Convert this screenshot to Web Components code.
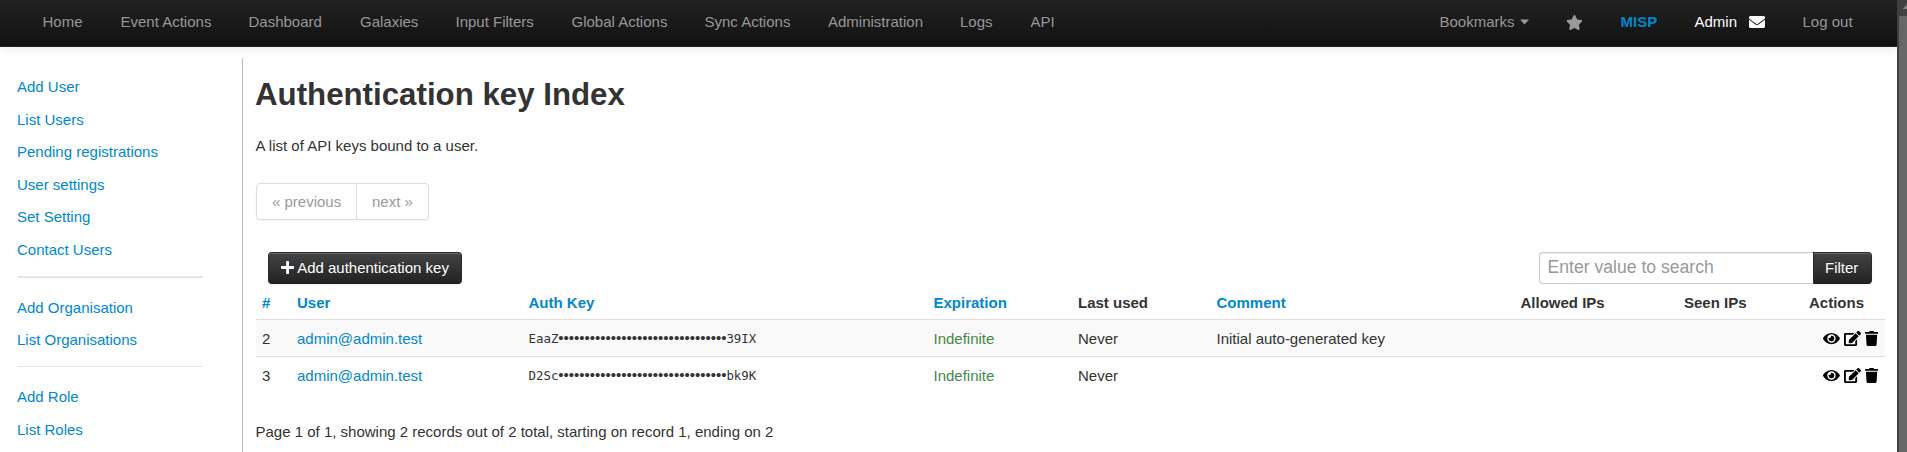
<!DOCTYPE html>
<html lang="en">
<head>
<meta charset="utf-8">
<title>Authentication key Index - MISP</title>
<style>
html,body{margin:0;height:100%;overflow:hidden;background:#fff}
body{font:15px/22px "Liberation Sans",Arial,sans-serif;color:#333}
</style>
</head>
<body>
<misp-app></misp-app>
<script>
const ICONS = {
  star: ['0 0 576 512','M259.3 17.8L194 150.2 47.900 171.500c-26.200 3.800-36.700 36.100-17.700 54.600l105.700 103-25 145.500c-4.500 26.300 23.200 46 46.400 33.700L288 439.600l130.700 68.700c23.200 12.200 50.900-7.400 46.400-33.700l-25-145.500 105.700-103c19-18.500 8.500-50.800-17.700-54.600L382 150.200 316.700 17.800c-11.700-23.600-45.600-23.900-57.400 0z'],
  envelope: ['0 0 512 512','M502.300 190.800c3.900-3.100 9.700-.2 9.700 4.700V400c0 26.500-21.500 48-48 48H48c-26.500 0-48-21.500-48-48V195.600c0-5 5.700-7.800 9.700-4.700 22.400 17.400 52.100 39.500 154.100 113.600 21.100 15.400 56.700 47.800 92.200 47.600 35.700.3 72-32.800 92.300-47.600 102-74.100 131.600-96.300 154-113.700zM256 320c23.200.4 56.600-29.200 73.400-41.400 132.700-96.300 142.800-104.700 173.400-128.700 5.800-4.500 9.200-11.500 9.200-18.900v-19c0-26.500-21.500-48-48-48H48c-26.500 0-48 21.500-48 48v19c0 7.400 3.400 14.300 9.200 18.900 30.600 23.900 40.700 32.400 173.400 128.700 16.800 12.200 50.200 41.800 73.400 41.400z'],
  plus: ['0 0 448 512','M416 208H272V64c0-17.670-14.330-32-32-32h-32c-17.670 0-32 14.330-32 32v144H32c-17.670 0-32 14.330-32 32v32c0 17.670 14.330 32 32 32h144v144c0 17.670 14.330 32 32 32h32c17.670 0 32-14.330 32-32V304h144c17.670 0 32-14.330 32-32v-32c0-17.670-14.330-32-32-32z'],
  eye: ['0 0 576 512','M572.520 241.400C518.290 135.590 410.930 64 288 64S57.680 135.640 3.480 241.410a32.350 32.350 0 0 0 0 29.190C57.710 376.410 165.070 448 288 448s230.320-71.640 284.520-177.410a32.350 32.350 0 0 0 0-29.190zM288 400a144 144 0 1 1 144-144 143.930 143.930 0 0 1-144 144zm0-240a95.310 95.310 0 0 0-25.310 3.790 47.850 47.850 0 0 1-66.900 66.900A95.780 95.780 0 1 0 288 160z'],
  edit: ['0 0 576 512','M402.600 83.200l90.200 90.200c3.800 3.800 3.800 10 0 13.800L274.400 405.600l-92.800 10.300c-12.400 1.400-22.900-9.100-21.500-21.500l10.300-92.800L388.800 83.200c3.800-3.800 10-3.800 13.800 0zm162-22.900l-48.800-48.800c-15.200-15.200-39.900-15.200-55.200 0l-35.400 35.400c-3.800 3.800-3.800 10 0 13.800l90.200 90.200c3.800 3.800 10 3.800 13.800 0l35.400-35.400c15.200-15.300 15.200-40 0-55.200zM384 346.200V448H64V128h229.800c3.200 0 6.200-1.300 8.500-3.500l40-40c7.600-7.600 2.200-20.500-8.500-20.500H48C21.500 64 0 85.500 0 112v352c0 26.500 21.500 48 48 48h352c26.500 0 48-21.500 48-48V306.200c0-10.700-12.900-16-20.500-8.500l-40 40c-2.200 2.300-3.500 5.300-3.500 8.500z'],
  trash: ['0 0 448 512','M432 32H312l-9.400-18.700A24 24 0 0 0 281.100 0H166.800a23.720 23.720 0 0 0-21.400 13.300L136 32H16A16 16 0 0 0 0 48v32a16 16 0 0 0 16 16h416a16 16 0 0 0 16-16V48a16 16 0 0 0-16-16zM53.200 467a48 48 0 0 0 47.900 45h245.800a48 48 0 0 0 47.900-45L416 128H32z']
};
function define(name, html, setup) {
  customElements.define(name, class extends HTMLElement {
    constructor() {
      super();
      const t = document.createElement('template');
      t.innerHTML = html;
      this.attachShadow({mode: 'open'}).appendChild(t.content.cloneNode(true));
    }
    connectedCallback() { if (setup) setup(this, this.shadowRoot); }
  });
}
define('fa-icon', `<style>:host{display:inline-flex;flex:none}svg{display:block;fill:currentColor}</style><svg><path/></svg>`, (el, root) => {
  const [box, d] = ICONS[el.getAttribute('name')];
  const svg = root.querySelector('svg');
  const [, , w, h] = box.split(' ').map(Number);
  const size = Number(el.getAttribute('size') || 15);
  svg.setAttribute('viewBox', box);
  svg.setAttribute('width', size * w / h);
  svg.setAttribute('height', size);
  root.querySelector('path').setAttribute('d', d);
});
define('nav-item', `<style>:host{display:block;flex:none;color:#999;white-space:nowrap;width:var(--w,auto)}a{display:flex;align-items:center;height:22px}</style><a><slot></slot></a>`);
define('top-bar', `<style>
:host{display:flex;box-sizing:border-box;height:47px;padding:11px 0 0 42.500px;background:linear-gradient(#222,#111);border-bottom:1px solid #252525;box-shadow:0 1px 10px rgba(0,0,0,.1);position:relative}
nav-item{text-shadow:0 -1px 0 rgba(0,0,0,.25)}
.right{display:flex;margin-left:auto}
.caret{display:block;margin:0 0 0 5px;fill:#999}
b{color:#08c}.admin{color:#fff}
</style>
<nav-item style="--w:78px">Home</nav-item><nav-item style="--w:128px">Event Actions</nav-item><nav-item style="--w:111.500px">Dashboard</nav-item><nav-item style="--w:95.500px">Galaxies</nav-item><nav-item style="--w:116px">Input Filters</nav-item><nav-item style="--w:133px">Global Actions</nav-item><nav-item style="--w:123.500px">Sync Actions</nav-item><nav-item style="--w:132px">Administration</nav-item><nav-item style="--w:70.500px">Logs</nav-item><nav-item>API</nav-item>
<div class="right"><nav-item style="--w:126px">Bookmarks<svg class="caret" width="9" height="6"><path d="M0 .5h9L4.500 5.500z"/></svg></nav-item><nav-item style="--w:55px"><fa-icon name="star"></fa-icon></nav-item><nav-item style="--w:74px"><b>MISP</b></nav-item><nav-item class="admin" style="--w:54px">Admin</nav-item><nav-item class="admin" style="--w:54px"><fa-icon name="envelope" size="16"></fa-icon></nav-item><nav-item style="--w:94.500px">Log out</nav-item></div>`);
define('side-menu', `<style>
:host{display:block;box-sizing:border-box;width:243px;margin-top:11px;padding:13.100px 39px 0 17px;border-right:1px solid #bbb}
::slotted(a){display:block;height:32.500px;line-height:32.500px;color:#08c}
::slotted(hr){border:0;border-top:1px solid #e5e5e5;margin:9.500px 0 14px 1px;height:0}
::slotted(hr.thick){border-top-width:2px;margin:10px 0 13.500px 1px}
</style><slot></slot>`);
define('page-links', `<style>:host{display:flex;width:max-content;border:1px solid #ddd;border-radius:4px;box-shadow:0 1px 2px rgba(0,0,0,.05);color:#999}
span{box-sizing:border-box;height:35px;line-height:35px;padding-left:15px;width:99px}span+span{border-left:1px solid #ddd;width:72px}</style><span>« previous</span><span>next »</span>`);
define('inverse-button', `<style>:host{display:flex;box-sizing:border-box;height:32px;align-items:center;color:#fff;background:linear-gradient(#444,#222);border:1px solid #2a2a2a;border-bottom-color:#1a1a1a;border-radius:var(--r,4px);box-shadow:inset 0 1px 0 rgba(255,255,255,.2),0 1px 2px rgba(0,0,0,.05);text-shadow:0 -1px 0 rgba(0,0,0,.25);padding:0 var(--p,12px) 1px;white-space:nowrap;gap:3px}</style><slot></slot>`);
define('filter-box', `<style>:host{display:flex}
input{box-sizing:border-box;width:274px;height:32px;margin:0;border:1px solid #ccc;border-right:0;border-radius:4px 0 0 4px;padding:0 0 2px 7.500px;font:17.600px "Liberation Sans",Arial,sans-serif;box-shadow:inset 0 1px 1px rgba(0,0,0,.075)}
input::placeholder{color:#999;opacity:1}inverse-button{--r:0 4px 4px 0;--p:11px;width:59px}</style><input placeholder="Enter value to search"><inverse-button>Filter</inverse-button>`);
define('key-code', `<style>:host{display:block;font:12.400px/22px "DejaVu Sans Mono",monospace;white-space:nowrap}i{font:15px/1 "Liberation Sans",Arial,sans-serif;font-style:normal}</style><slot name="a"></slot><i></i><slot name="b"></slot>`, (el, root) => { root.querySelector('i').textContent = '•'.repeat(32); });
define('row-actions', `<style>:host{display:flex;justify-content:flex-end;align-items:center;gap:4px;height:20px;color:#000}</style><fa-icon name="eye"></fa-icon><fa-icon name="edit"></fa-icon><fa-icon name="trash"></fa-icon>`);
define('key-table', `<style>
:host{display:block}
.row{display:grid;grid-template-columns:35px 231.500px 405px 144.500px 138.500px 304px 163.500px 125px 1fr;box-sizing:border-box;height:37px;padding:8px 6px 0;border-top:1px solid #ddd}
.head{height:35px;border:0;font-weight:bold;padding-top:8px}.odd{background:#f9f9f9}
.l{color:#08c}.g{color:#468847}row-actions{margin:0 1px 0 -6px}
</style>
<div class="row head"><span class="l">#</span><span class="l">User</span><span class="l">Auth Key</span><span class="l">Expiration</span><span>Last used</span><span class="l">Comment</span><span>Allowed IPs</span><span>Seen IPs</span><span>Actions</span></div>
<div class="row odd"><span>2</span><span class="l">admin@admin.test</span><key-code><span slot="a">EaaZ</span><span slot="b">39IX</span></key-code><span class="g">Indefinite</span><span>Never</span><span>Initial auto-generated key</span><span></span><span></span><row-actions></row-actions></div>
<div class="row"><span>3</span><span class="l">admin@admin.test</span><key-code><span slot="a">D2Sc</span><span slot="b">bk9K</span></key-code><span class="g">Indefinite</span><span>Never</span><span></span><span></span><span></span><row-actions></row-actions></div>`);
define('scroll-bar', `<style>:host{display:flex;flex-direction:column;box-sizing:border-box;width:10px;background:#424242;padding-left:2px;overflow:hidden}
svg{display:block;flex:none}.thumb{flex:1;background:#686868}</style><svg width="8" height="16"><path d="M3.500 9L8 4.500V9z" fill="#868686"/></svg><div class="thumb"></div>`);
define('misp-app', `<style>
:host{display:flex;height:452px}
.page{flex:1;min-width:0;display:flex;flex-direction:column}
.body{display:flex;flex:1;min-height:0}
main{flex:1;padding:0 12px 0 13px;min-width:0}
h2{font-size:31.250px;line-height:44px;margin:26px 0 0 -1px}
p{margin:0}.intro{margin:18px 0 26px -.5px}
.tools{display:flex;justify-content:space-between;margin:32px 13px 0 12px}
.count{margin:28px 0 0 -.5px}
</style>
<div class="page"><top-bar></top-bar>
<div class="body"><side-menu><a>Add User</a><a>List Users</a><a>Pending registrations</a><a>User settings</a><a>Set Setting</a><a>Contact Users</a><hr class="thick"><a>Add Organisation</a><a>List Organisations</a><hr><a>Add Role</a><a>List Roles</a></side-menu>
<main><h2>Authentication key Index</h2><p class="intro">A list of API keys bound to a user.</p><page-links></page-links>
<div class="tools"><inverse-button><fa-icon name="plus"></fa-icon>Add authentication key</inverse-button><filter-box></filter-box></div>
<key-table></key-table><p class="count">Page 1 of 1, showing 2 records out of 2 total, starting on record 1, ending on 2</p></main></div></div>
<scroll-bar></scroll-bar>`);
</script>
</body>
</html>
